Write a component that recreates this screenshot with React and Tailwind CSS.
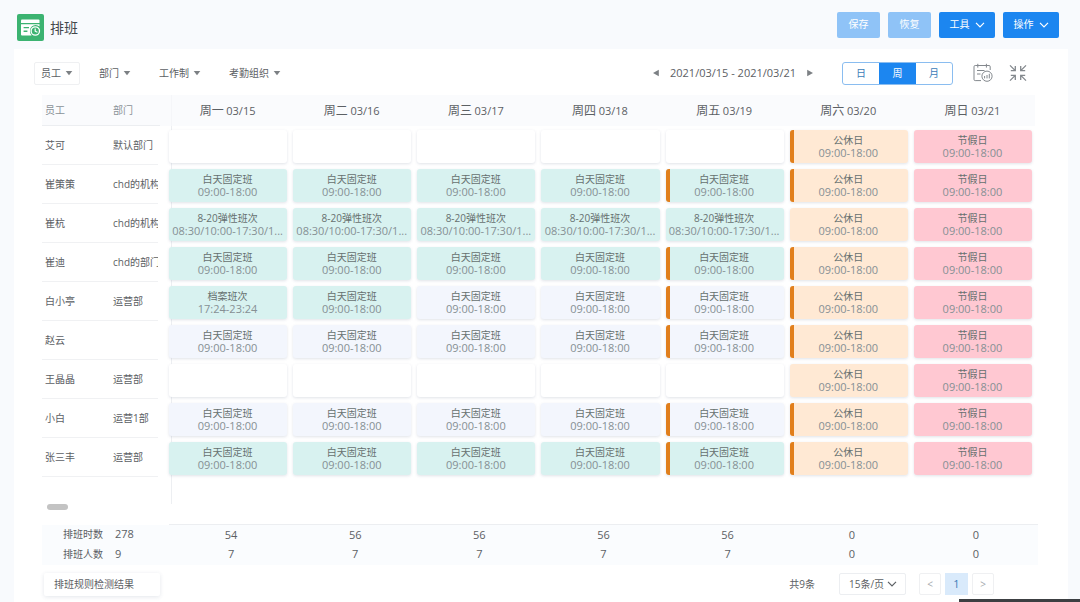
import React from "react";

const FIXED = ["白天固定班", "09:00-18:00"];
const FLEX = ["8-20弹性班次", "08:30/10:00-17:30/1..."];
const ARCHIVE = ["档案班次", "17:24-23:24"];
const REST = ["公休日", "09:00-18:00"];
const HOLIDAY = ["节假日", "09:00-18:00"];

const tones = {
  teal: "bg-[#d8f2f0]",
  pale: "bg-[#f3f6fd]",
  empty: "bg-white",
  rest: "bg-[#ffe9d4]",
  holiday: "bg-[#ffc8d2]",
};

const teal = { text: FIXED, tone: "teal" };
const tealMarked = { ...teal, marked: true };
const pale = { text: FIXED, tone: "pale" };
const paleMarked = { ...pale, marked: true };
const flex = { text: FLEX, tone: "teal" };
const archive = { text: ARCHIVE, tone: "teal" };
const empty = { tone: "empty" };
const rest = { text: REST, tone: "rest" };
const restMarked = { ...rest, marked: true };
const holiday = { text: HOLIDAY, tone: "holiday" };

const days = [
  ["周一", "03/15"],
  ["周二", "03/16"],
  ["周三", "03/17"],
  ["周四", "03/18"],
  ["周五", "03/19"],
  ["周六", "03/20"],
  ["周日", "03/21"],
];

const rows = [
  { name: "艾可", dept: "默认部门", cells: [empty, empty, empty, empty, empty, restMarked, holiday] },
  { name: "崔策策", dept: "chd的机构", cells: [teal, teal, teal, teal, tealMarked, restMarked, holiday] },
  { name: "崔杭", dept: "chd的机构", cells: [flex, flex, flex, flex, flex, rest, holiday] },
  { name: "崔迪", dept: "chd的部门", cells: [teal, teal, teal, teal, tealMarked, restMarked, holiday] },
  { name: "白小亭", dept: "运营部", cells: [archive, teal, pale, pale, paleMarked, restMarked, holiday] },
  { name: "赵云", dept: "", cells: [pale, pale, pale, pale, paleMarked, restMarked, holiday] },
  { name: "王晶晶", dept: "运营部", cells: [empty, empty, empty, empty, empty, rest, holiday] },
  { name: "小白", dept: "运营1部", cells: [pale, pale, pale, pale, paleMarked, restMarked, holiday] },
  { name: "张三丰", dept: "运营部", cells: [teal, teal, teal, teal, tealMarked, restMarked, holiday] },
];

const totals = [
  { label: "排班时数", sum: 278, values: [54, 56, 56, 56, 56, 0, 0] },
  { label: "排班人数", sum: 9, values: [7, 7, 7, 7, 7, 0, 0] },
];

function Chevron({ className }) {
  return (
    <svg viewBox="0 0 10 6" fill="none" stroke="currentColor" strokeWidth="1.2" className={`h-[6px] w-[10px] ${className || ""}`} aria-hidden="true">
      <path d="M1 .8l4 4 4-4" />
    </svg>
  );
}

function Triangle({ dir }) {
  const d = { down: "M.7 2h6.6L4 6.2z", left: "M6.8 .8v6.4L1 4z", right: "M1.2 .8v6.4L7 4z" }[dir];
  return (
    <svg viewBox="0 0 8 8" className="size-2 shrink-0" fill="#7c8084" aria-hidden="true">
      <path d={d} />
    </svg>
  );
}

function Logo() {
  return (
    <svg viewBox="0 0 27 27" className="size-[27px]" fill="none" aria-hidden="true">
      <rect width="27" height="27" rx="2" fill="#3cb371" />
      <path d="M4 6.6Q4 5.6 5 5.6H21.5Q22.5 5.6 22.5 6.6V9H4z" fill="#fff" />
      <path d="M4 10.3H22.5V12.6A5.6 5.6 0 0 0 13 16.4 5.6 5.6 0 0 0 14.6 21.4H5Q4 21.4 4 20.4z" fill="#fff" />
      <path d="M6.6 13.6H12M6.6 17.2H10.4" stroke="#3cb371" strokeWidth="1.4" />
      <circle cx="18.3" cy="17" r="4.2" fill="#3cb371" stroke="#fff" strokeWidth="1.3" />
      <path d="M18.2 14.4V17.2L20.4 18.2" stroke="#fff" strokeWidth="1.2" />
    </svg>
  );
}

function ReportIcon() {
  return (
    <svg viewBox="0 0 20 20" className="size-5" fill="none" stroke="#83888d" strokeWidth="1" aria-hidden="true">
      <path d="M8 17.6H2.2Q1 17.6 1 16.4V3.7Q1 2.5 2.2 2.5H16Q17.2 2.5 17.2 3.7V7" />
      <path d="M4.8 .8V4.6M13.4 .8V4.6M4 7.5H11.5M4 11H7.5" />
      <circle cx="14" cy="13.2" r="5.1" />
      <path d="M11.6 13v2.4M14 12v3.4M16.3 10.8v4.6" />
    </svg>
  );
}

function CollapseIcon() {
  return (
    <svg viewBox="0 0 18 18" className="size-[18px]" fill="none" stroke="#83888d" strokeWidth="1.3" aria-hidden="true">
      <path d="M1 1.4l5 5M6.3 2v4.6H1.8" />
      <path d="M17 1.4l-5 5M11.7 2v4.6h4.5" />
      <path d="M1 16.6l5-5M6.3 16v-4.6H1.8" />
      <path d="M17 16.6l-5-5M11.7 16v-4.6h4.5" />
    </svg>
  );
}

function ShiftCell({ text, tone, marked }) {
  return (
    <div className={`flex h-[33px] overflow-hidden rounded-[3px] shadow-[0_1px_3px_rgba(60,80,110,0.16)] ${tones[tone]}`}>
      {marked && <span className="w-1 shrink-0 bg-[#e17f1c]" />}
      <div className={`flex flex-1 flex-col justify-center text-center whitespace-nowrap ${marked ? "pr-[5px]" : "pr-px"}`}>
        {text && (
          <>
            <div className="text-[10px] leading-[13px] text-[#66706f]">{text[0]}</div>
            <div className="text-[11px] leading-[12px] text-[#869094]">{text[1]}</div>
          </>
        )}
      </div>
    </div>
  );
}

export default function App() {
  return (
    <div className="flex min-h-screen flex-col bg-[#f8fafd] pr-3 pl-[14px] font-['Open_Sans','Noto_Sans_CJK_SC',sans-serif] text-[10px] text-[#5c6064]">
      <header className="flex h-[49px] items-center justify-between pr-[9px] pl-[3px]">
        <div className="flex items-center gap-[6px] pt-[5px]">
          <Logo />
          <h1 className="text-[14px] text-[#44484c]">排班</h1>
        </div>
        <div className="flex gap-2 text-white">
          <button className="h-[26px] w-[43px] rounded-[2px] bg-[#8fc3f7]">保存</button>
          <button className="h-[26px] w-[43px] rounded-[2px] bg-[#8fc3f7]">恢复</button>
          <button className="flex h-[26px] w-14 items-center justify-center gap-[5px] rounded-[2px] bg-[#1c86f0]">
            工具 <Chevron />
          </button>
          <button className="flex h-[26px] w-14 items-center justify-center gap-[5px] rounded-[2px] bg-[#1c86f0]">
            操作 <Chevron />
          </button>
        </div>
      </header>

      <main className="flex-1 bg-white pr-[33px] pl-7">
        <div className="-ml-2 flex h-[46px] items-center justify-between pt-[2px] pr-2">
          <div className="flex items-center">
            <button className="flex h-[23px] items-center gap-1 rounded-[2px] border border-[#eff0f2] px-[6px]">
              员工 <Triangle dir="down" />
            </button>
            <button className="ml-[19px] flex items-center gap-1">
              部门 <Triangle dir="down" />
            </button>
            <button className="ml-7 flex items-center gap-1">
              工作制 <Triangle dir="down" />
            </button>
            <button className="ml-7 flex items-center gap-1">
              考勤组织 <Triangle dir="down" />
            </button>
          </div>
          <div className="flex items-center">
            <button aria-label="上一周"><Triangle dir="left" /></button>
            <span className="mx-2 w-[130px] text-center text-[11px] whitespace-nowrap">2021/03/15 - 2021/03/21</span>
            <button aria-label="下一周"><Triangle dir="right" /></button>
            <div className="ml-7 flex h-[23px] overflow-hidden rounded-[3px] border border-[#8abdf0] text-[#3c7cb8]">
              <button className="w-9">日</button>
              <button className="w-[37px] bg-[#1c86f0] text-white">周</button>
              <button className="w-9">月</button>
            </div>
            <button className="ml-5" aria-label="排班报表"><ReportIcon /></button>
            <button className="ml-4" aria-label="收起"><CollapseIcon /></button>
          </div>
        </div>

        <div className="relative h-[409px]">
          <span className="absolute top-0 bottom-0 left-[129px] w-px bg-[#edeff2]" />
          <table className="relative w-full table-fixed border-collapse">
            <colgroup>
              <col className="w-[68px]" />
              <col className="w-[56px]" />
              {days.map((d) => <col key={d[1]} />)}
            </colgroup>
            <thead>
              <tr className="h-[31px] bg-[#f8f9fc]/70">
                <th className="p-0 text-left font-normal text-[#8a9298]">
                  <div className="h-[31px] border-b border-[#eceef1] pl-[3px] leading-[30px]">员工</div>
                </th>
                <th className="p-0 text-left font-normal text-[#8a9298]">
                  <div className="mr-[6px] h-[31px] border-b border-[#eceef1] pl-[3px] leading-[30px]">部门</div>
                </th>
                {days.map(([name, date]) => (
                  <th key={date} className="p-0 pr-px text-center font-normal whitespace-nowrap">
                    <span className="text-[12px]">{name}</span> <span className="text-[11px]">{date}</span>
                  </th>
                ))}
              </tr>
            </thead>
            <tbody>
              {rows.map((row) => (
                <tr key={row.name} className="h-[39px]">
                  <td className="p-0">
                    <div className="h-[39px] border-b border-[#f0f1f3] pl-[3px] leading-[39px]">{row.name}</div>
                  </td>
                  <td className="p-0">
                    <div className="mr-[8px] h-[39px] overflow-hidden border-b border-[#f0f1f3] pl-[3px] leading-[39px] whitespace-nowrap">{row.dept}</div>
                  </td>
                  {row.cells.map((cell, i) => (
                    <td key={days[i][1]} className="px-[3px] pt-[4px] pb-[2px]">
                      <ShiftCell {...cell} />
                    </td>
                  ))}
                </tr>
              ))}
            </tbody>
          </table>
        </div>

        <div className="ml-[5px] h-[6px] w-[21px] rounded-full bg-[#c3c3c3]" />

        <div className="-mr-[3px] mt-[14px]">
          <table className="w-full table-fixed border-collapse">
            <colgroup>
              <col className="w-[70px]" />
              <col className="w-[57px]" />
              {days.map((d) => <col key={d[1]} />)}
            </colgroup>
            <tbody>
              {totals.map((row, r) => (
                <tr key={row.label} className="h-5 bg-[#fafcfe]">
                  <th scope="row" className="p-0 pl-[21px] text-left font-normal whitespace-nowrap">{row.label}</th>
                  <td className="p-0 pl-[3px] text-[11px]">{row.sum}</td>
                  {row.values.map((v, i) => (
                    <td key={days[i][1]} className={`p-0 text-center text-[11px] ${r === 0 ? "border-t border-[#eceef1]" : ""}`}>{v}</td>
                  ))}
                </tr>
              ))}
            </tbody>
          </table>
        </div>

        <footer className="mt-2 flex items-center justify-between pr-[41px] pl-[2px]">
          <button className="h-[23px] w-[116px] rounded-[2px] bg-white pl-[10px] text-left shadow-[0_1px_4px_rgba(60,80,110,0.14)]">排班规则检测结果</button>
          <div className="flex items-center">
            <span className="mr-6">共9条</span>
            <label className="relative mr-[13px] flex items-center">
              <select aria-label="每页条数" className="h-[22px] w-[67px] appearance-none rounded-[2px] border border-[#eceef1] bg-white pl-[9px] text-[10px]">
                <option>15条/页</option>
              </select>
              <Chevron className="pointer-events-none absolute right-[9px]" />
            </label>
            <nav className="flex gap-1" aria-label="分页">
              <button className="h-[22px] w-[22px] rounded-[2px] border border-[#eff0f2] text-[#a5a9ad]">&lt;</button>
              <button className="h-[22px] w-[23px] bg-[#d9eafb] text-[11px] text-[#3c7cb8]">1</button>
              <button className="h-[22px] w-[22px] rounded-[2px] border border-[#eff0f2] text-[#a5a9ad]">&gt;</button>
            </nav>
          </div>
        </footer>
      </main>
      <div className="fixed right-0 bottom-0 h-[3px] w-[121px] bg-[#3c3f42]" />
    </div>
  );
}
